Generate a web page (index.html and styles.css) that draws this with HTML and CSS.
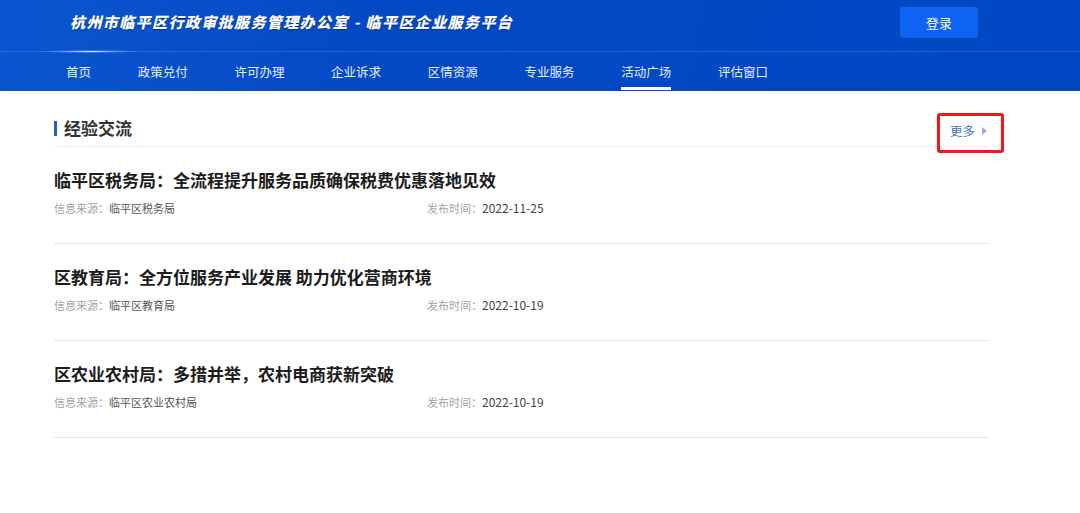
FILE: index.html
```html
<!DOCTYPE html>
<html lang="zh-CN">
<head>
    <meta charset="UTF-8">
    <title>临平区企业服务平台</title>
    <link rel="stylesheet" href="styles.css">
</head>
<body>

    <div id="header">
        <div class="header-top">
            <h1 class="site-title">杭州市临平区行政审批服务管理办公室 - 临平区企业服务平台</h1>
            <a class="login-btn">登录</a>
        </div>
        <div class="header-nav">
            <a class="nav-item">首页</a>
            <a class="nav-item">政策兑付</a>
            <a class="nav-item">许可办理</a>
            <a class="nav-item">企业诉求</a>
            <a class="nav-item">区情资源</a>
            <a class="nav-item">专业服务</a>
            <a class="nav-item active">活动广场</a>
            <a class="nav-item">评估窗口</a>
        </div>
    </div>

    <div id="main-container">
        <div class="section-head">
            <h2 class="section-title">经验交流</h2>
            <a class="more-link">更多<span class="more-arrow"></span></a>
        </div>

        <div class="article">
            <h3 class="article-title">临平区税务局：全流程提升服务品质确保税费优惠落地见效</h3>
            <div class="article-meta">
                <span class="meta-source"><span class="meta-label">信息来源：</span>临平区税务局</span>
                <span><span class="meta-label">发布时间：</span><span class="meta-date">2022-11-25</span></span>
            </div>
        </div>
        <div class="article">
            <h3 class="article-title">区教育局：全方位服务产业发展 助力优化营商环境</h3>
            <div class="article-meta">
                <span class="meta-source"><span class="meta-label">信息来源：</span>临平区教育局</span>
                <span><span class="meta-label">发布时间：</span><span class="meta-date">2022-10-19</span></span>
            </div>
        </div>
        <div class="article">
            <h3 class="article-title">区农业农村局：多措并举，农村电商获新突破</h3>
            <div class="article-meta">
                <span class="meta-source"><span class="meta-label">信息来源：</span>临平区农业农村局</span>
                <span><span class="meta-label">发布时间：</span><span class="meta-date">2022-10-19</span></span>
            </div>
        </div>
    </div>

</body>
</html>
```

FILE: styles.css
```css
body {
    margin: 0;
    background-color: #ffffff;
    font-family: "Noto Sans CJK SC", "Noto Sans", sans-serif;
}
#header {
    height: 91px;
    background: linear-gradient(100deg, #0b56d0 0%, #0449c4 35%, #0047c3 100%);
    color: #ffffff;
}
.header-top {
    height: 51px;
    display: flex;
    align-items: center;
    justify-content: space-between;
    padding: 0 102px 0 70px;
    border-bottom: 1px solid rgba(120, 170, 255, 0.25);
    position: relative;
}
.header-top::after {
    content: "";
    position: absolute;
    left: 40px;
    bottom: -2px;
    width: 100px;
    height: 3px;
    background: radial-gradient(ellipse at center, rgba(230, 242, 255, 0.95) 0%, rgba(140, 190, 255, 0.4) 40%, rgba(0, 70, 200, 0) 75%);
}
.site-title {
    margin: 0 0 8px 0;
    font-size: 15px;
    font-weight: 900;
    font-style: italic;
    letter-spacing: 1.4px;
    text-shadow: 0 1px 1px rgba(0, 20, 80, 0.5);
}
.login-btn {
    width: 78px;
    height: 31px;
    margin-top: -7px;
    background-color: #0f63f3;
    border-radius: 3px;
    font-size: 13px;
    line-height: 31px;
    text-align: center;
}
.header-nav {
    height: 39px;
    display: flex;
    gap: 46.7px;
    padding-left: 66px;
}
.nav-item {
    font-size: 12.5px;
    line-height: 39px;
    color: #e6eeff;
    position: relative;
}
.nav-item.active::after {
    content: "";
    position: absolute;
    left: 0;
    right: 0;
    bottom: 1px;
    height: 3px;
    background-color: #ffffff;
}
#main-container {
    width: 935px;
    margin-left: 54px;
}
.section-head {
    height: 26px;
    display: flex;
    align-items: center;
    justify-content: space-between;
    padding: 24px 0 5px 0;
    border-bottom: 1px solid #ebebeb;
}
.section-title {
    margin: 0;
    font-size: 17px;
    font-weight: bold;
    line-height: 26px;
    color: #333333;
    border-left: 3px solid #1d5fd6;
    padding-left: 7px;
    height: 15px;
    display: flex;
    align-items: center;
}
.more-link {
    font-size: 12.5px;
    line-height: 18px;
    color: #4373c9;
    margin: 6px 2px 0 0;
    position: relative;
    display: flex;
    align-items: center;
    gap: 7px;
}
.more-link::after {
    content: "";
    position: absolute;
    left: -13px;
    right: -17px;
    top: -9px;
    bottom: -13px;
    border: 3px solid #ec1a1e;
    border-radius: 3px;
}
.more-arrow {
    width: 0;
    height: 0;
    border-top: 4px solid transparent;
    border-bottom: 4px solid transparent;
    border-left: 5px solid #9aaed6;
}
.article {
    padding: 21px 0 25px 0;
    border-bottom: 1px solid #e6e6e6;
}
.article-title {
    margin: 0;
    font-size: 17px;
    font-weight: bold;
    height: 24px;
    line-height: 24px;
    color: #1c1c1c;
}
.article-meta {
    margin-top: 6px;
    display: flex;
    height: 20px;
    font-size: 11px;
    line-height: 20px;
    color: #555555;
}
.meta-source {
    width: 373px;
}
.meta-label {
    color: #a3a3a3;
}
.meta-date {
    font-size: 12px;
    color: #444444;
}
```
